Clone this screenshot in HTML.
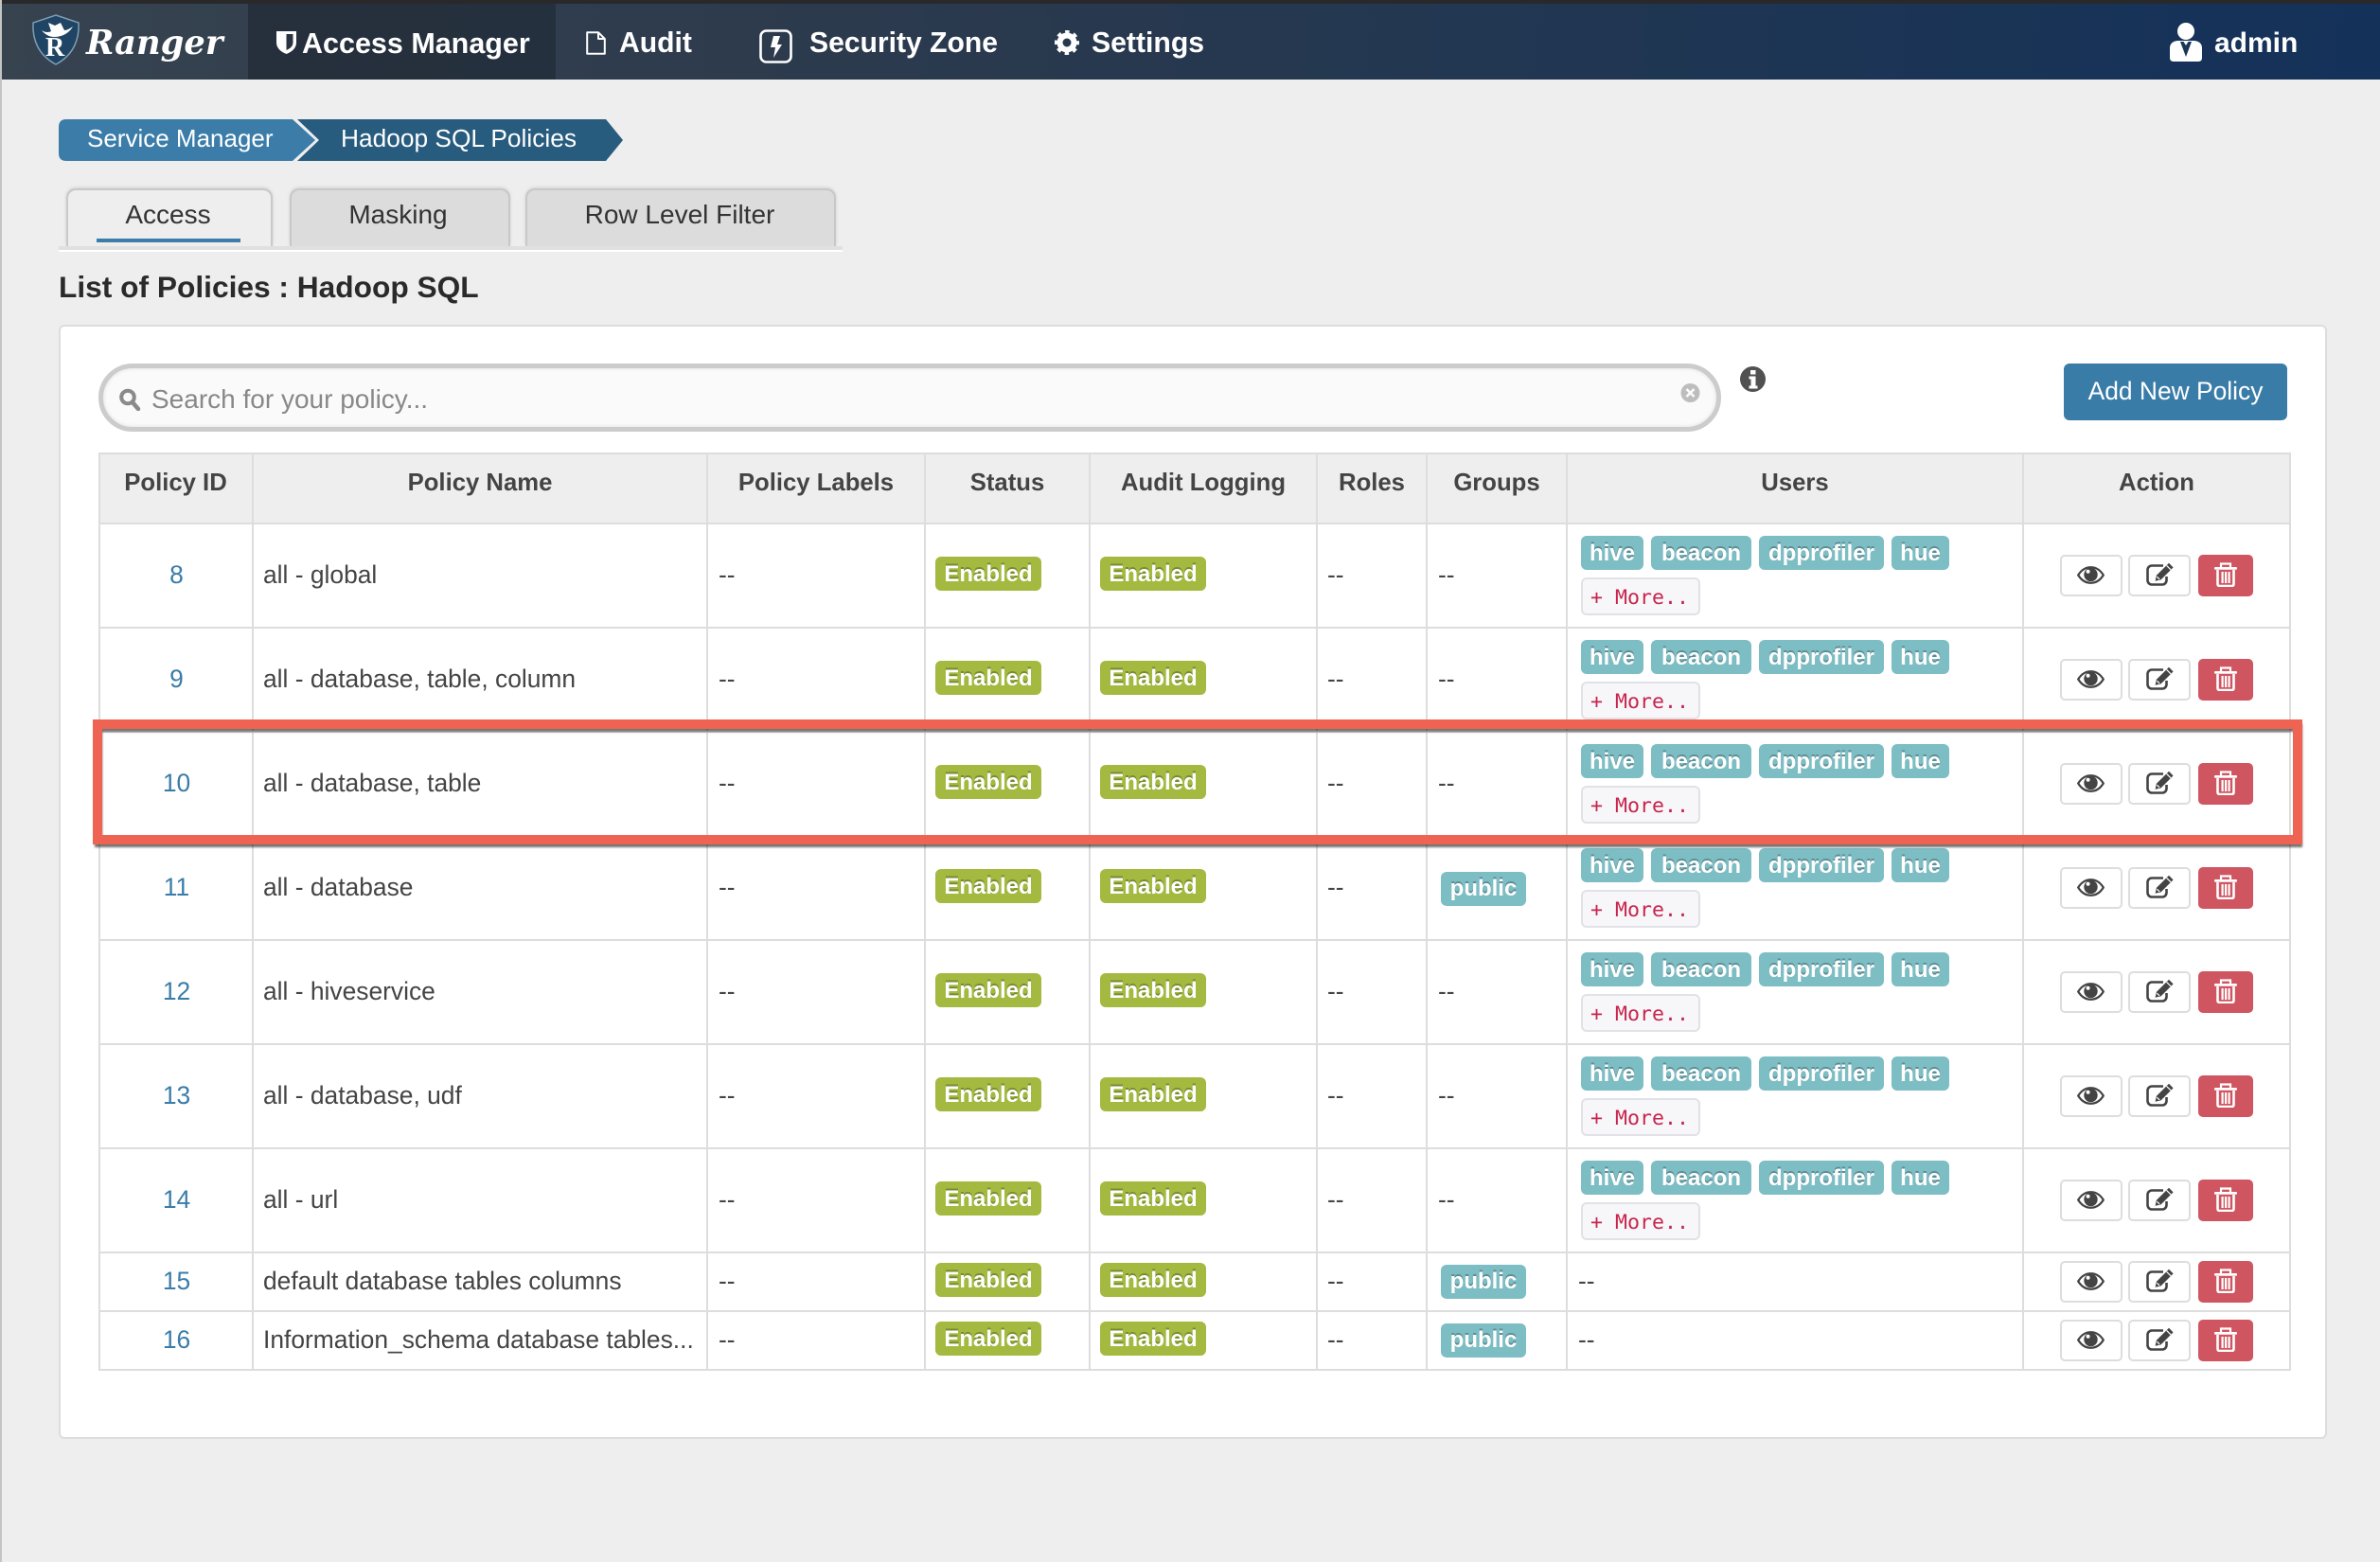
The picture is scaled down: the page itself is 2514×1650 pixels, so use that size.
<!DOCTYPE html>
<html><head><meta charset="utf-8"><title>Ranger</title>
<style>
html,body{margin:0;padding:0;width:2514px;height:1650px;overflow:hidden;background:#eee;font-family:"Liberation Sans",Arial,sans-serif;color:#444}
*{box-sizing:border-box}
.abs,.t,.x,.en,.tg,.more,.btn,.v,.h,.th{position:absolute}
.t{white-space:nowrap;line-height:40px}
#lb{position:absolute;left:0;top:0;width:2px;height:1650px;background:#c4c4c4;z-index:5}
#nav{position:absolute;left:0;top:0;width:2514px;height:84px;border-top:4px solid #29292c;background:linear-gradient(92deg,#37434f 0%,#2c3a4d 35%,#1f3653 70%,#14315a 100%)}
#active{position:absolute;left:262px;top:4px;width:325px;height:80px;background:linear-gradient(92deg,#262f3c,#25303e)}
.n{color:#fff;font-weight:bold;font-size:30.5px}
.bc{color:#fff;font-size:26px}
.tab{position:absolute;top:199px;height:61px;border:2px solid #c8c8c8;border-bottom:0;border-radius:10px 10px 0 0;box-shadow:0 -1px 3px rgba(0,0,0,.12);background:#dcdcdc;text-align:center;font-size:28px;line-height:51px;color:#333}
#panel{position:absolute;left:62px;top:343px;width:2396px;height:1177px;background:#fff;border:2px solid #ddd;border-radius:6px}
#search{position:absolute;left:104px;top:384px;width:1714px;height:72px;border:5px solid #ccc;border-radius:36px;background:#fafafa;box-shadow:inset 0 0 4px rgba(0,0,0,.12)}
#add{position:absolute;left:2180px;top:384px;width:236px;height:60px;background:#3a7ca8;border-radius:6px;color:#fff;font-size:26.4px;line-height:58px;text-align:center}
.v{top:478px;width:2px;height:970px;background:#ddd}
.h{left:104px;width:2316px;height:2px;background:#ddd}
.th{top:490px;line-height:40px;text-align:center;font-weight:bold;font-size:25.7px;color:#444}
.r{position:absolute;left:0;width:2514px;height:10px}
.x{font-size:26.4px;line-height:40px;white-space:nowrap;color:#444}
.tall .x{top:34px}.short .x{top:10px}
.id{left:106px;width:161px;text-align:center;color:#3a7ca9}
.nm{left:278px}.d1{left:759px}.d3{left:1402px}.d4{left:1519px}.d5{left:1667px}
.en,.tg{height:36px;line-height:37px;border-radius:6px;color:#fff;font-weight:bold;font-size:24px;text-align:center;text-shadow:0 -2px 0 rgba(0,0,0,.25);white-space:nowrap}
.en{width:112px;background:#a3b93f}
.tall .en{top:35px}.short .en{top:11px}
.e1{left:988px}.e2{left:1162px}
.tg{background:#7dbdc4;top:13px}
.g1{left:1670px;width:66px}.g2{left:1744px;width:106px}.g3{left:1858px;width:132px}.g4{left:1998px;width:61px}
.pb{left:1522px;width:90px;line-height:35px}
.tall .pb{top:38px}.short .pb{top:13px}
.more{left:1670px;top:57px;width:126px;height:40px;background:#f7f7f9;border:2px solid #e1e1e8;border-radius:6px;color:#c7254e;font-family:"DejaVu Sans Mono","Liberation Mono",monospace;font-size:21.6px;line-height:39px;padding-left:8px;white-space:nowrap}
.btn{height:44px;display:block;border-radius:5px}
.tall .btn{top:33px}.short .btn{top:9px}
.b1{left:2176px;width:66px;background:#fff;border:2px solid #ddd}
.b2{left:2248px;width:66px;background:#fff;border:2px solid #ddd}
.b3{left:2322px;width:58px;background:#cf5561}
.btn svg{position:absolute}
.b1 svg{left:16px;top:10px}
.b2 svg{left:17px;top:6px}
.b3 svg{left:17px;top:8px}
#red{position:absolute;left:98px;top:760px;width:2334px;height:132px;border:10px solid #ee6352;box-shadow:1px 4px 2px -1px rgba(0,0,0,.55),inset 1px 4px 2px -1px rgba(0,0,0,.55)}
</style></head>
<body>
<svg width="0" height="0" style="position:absolute">
<defs>
<g id="eye"><path d="M1.2 9.5C5 3.4 9.8 1.2 14.5 1.2S24 3.4 27.8 9.5C24 15.6 19.2 17.8 14.5 17.8S5 15.6 1.2 9.5Z" fill="#fff" stroke="#444" stroke-width="2.2"/><circle cx="14.5" cy="9" r="7.2" fill="#444"/><circle cx="11.6" cy="5.8" r="2" fill="#fff"/></g>
<g id="edit"><path d="M18 3.5H6a4.5 4.5 0 0 0-4.500 4.500v11a4.500 4.500 0 0 0 4.500 4.500h11a4.500 4.500 0 0 0 4.500-4.500v-4" fill="none" stroke="#444" stroke-width="2.600"/><path d="M24 .8l4.600 4.600-13 13-6 1.300 1.300-6z" fill="#444"/><path d="M21.600 3.400l4.400 4.400" stroke="#fff" stroke-width="1.200"/><path d="M11.400 15.200l2.700 2.700" stroke="#fff" stroke-width="1.200"/></g>
<g id="trash" fill="#fff"><rect x="0" y="5" width="24" height="2.800" rx="1"/><path d="M7 5.500V1.500h10v4" fill="none" stroke="#fff" stroke-width="2.200"/><path d="M3.500 8v15a2 2 0 0 0 2 2h13a2 2 0 0 0 2-2V8" fill="none" stroke="#fff" stroke-width="2.600"/><rect x="7.500" y="10" width="2.200" height="12"/><rect x="11" y="10" width="2.200" height="12"/><rect x="14.500" y="10" width="2.200" height="12"/></g>
</defs></svg>

<div id="nav"></div>
<div id="active"></div>
<div id="lb"></div>

<!-- logo -->
<svg class="abs" style="left:33px;top:15px" width="52" height="54" viewBox="0 0 52 54">
<path d="M26 1L50 9C51 26 45 43 26 53C7 43 1 26 2 9Z" fill="#1f4464" stroke="#7f9db3" stroke-width="1.500"/>
<path d="M11 17C16 20 19 19 21 18L18 9 25 12 31 9 35 17C38 17 41 15 44 13 40 20 33 24 24 24 19 24 14 21 11 17Z" fill="#fff"/>
<text x="15" y="44" font-family="'Liberation Serif',serif" font-weight="bold" font-size="28" fill="#fff">R</text>
</svg>
<div class="t" style="left:91px;top:26px;color:#fff;font-family:'DejaVu Serif','Liberation Serif',serif;font-weight:bold;font-style:italic;font-size:35.300px">Ranger</div>

<!-- nav icons -->
<svg class="abs" style="left:292px;top:33px" width="21" height="24" viewBox="0 0 21 24"><path d="M0 0H21V12C21 18 16 22 10.500 24C5 22 0 18 0 12Z" fill="#fff"/><path d="M10.500 3H17.500V12C17.500 16 14 18.500 10.500 20Z" fill="#2a3441"/></svg>
<div class="t n" style="left:319px;top:26px">Access Manager</div>
<svg class="abs" style="left:619px;top:33px" width="21" height="25" viewBox="0 0 21 25"><path d="M1.200 1.200H13L19.800 8V23.800H1.200Z M13 1.200V8H19.800" fill="none" stroke="#fff" stroke-width="2" stroke-linejoin="round"/></svg>
<div class="t n" style="left:654px;top:26px;font-size:30.100px">Audit</div>
<svg class="abs" style="left:802px;top:31px" width="35" height="36" viewBox="0 0 35 36"><rect x="1.500" y="1.500" width="32" height="33" rx="6" fill="none" stroke="#fff" stroke-width="2.600"/><path d="M15 7h7l-3 9h5l-9 14 2-11h-5z" fill="#fff"/></svg>
<div class="t n" style="left:855px;top:26px;font-size:30.100px">Security Zone</div>
<svg class="abs" style="left:1114px;top:32px" width="26" height="26" viewBox="0 0 26 26"><circle cx="13" cy="13" r="7.500" fill="none" stroke="#fff" stroke-width="6"/><circle cx="13" cy="13" r="11" fill="none" stroke="#fff" stroke-width="4" stroke-dasharray="4.320 4.320" stroke-dashoffset="2.160"/></svg>
<div class="t n" style="left:1153px;top:26px;font-size:30.200px">Settings</div>
<svg class="abs" style="left:2292px;top:24px" width="34" height="41" viewBox="0 0 34 41"><ellipse cx="17" cy="9" rx="9" ry="9" fill="#fff"/><path d="M8 19H26Q34 20 34 27V37Q34 41 30 41H4Q0 41 0 37V27Q0 20 8 19Z" fill="#fff"/><path d="M11 20L17 36L23 20L19.500 20L17 24L14.500 20Z" fill="#1b3655"/></svg>
<div class="t n" style="left:2339px;top:26px;font-size:30px">admin</div>

<!-- breadcrumb -->
<svg class="abs" style="left:62px;top:126px" width="600" height="44" viewBox="0 0 600 44">
<path d="M252 0H578L596 22L578 44H252L275 22Z" fill="#285c7e"/>
<path d="M8 0H247L271 22L247 44H8Q0 44 0 36V8Q0 0 8 0Z" fill="#3b7ca8"/>
</svg>
<div class="t bc" style="left:92px;top:126px">Service Manager</div>
<div class="t bc" style="left:360px;top:126px;font-size:26.300px">Hadoop SQL Policies</div>

<!-- tabs -->
<div class="tab" style="left:70px;width:218px;background:#eee;padding-right:3px">Access</div>
<div class="tab" style="left:306px;width:233px;padding-right:4px">Masking</div>
<div class="tab" style="left:555px;width:328px;padding-right:2px">Row Level Filter</div>
<div class="abs" style="left:102px;top:252px;width:152px;height:4px;background:#3b7ca8"></div>
<div class="abs" style="left:62px;top:260px;width:828px;height:4px;background:#e0e0e0"></div>
<div class="abs" style="left:62px;top:264px;width:828px;height:2px;background:#fff"></div>

<div class="t" style="left:62px;top:283px;font-size:31.700px;font-weight:bold;color:#2a2a2a">List of Policies : Hadoop SQL</div>

<div id="panel"></div>
<div id="search"></div>
<svg class="abs" style="left:125px;top:410px" width="24" height="24" viewBox="0 0 24 24"><circle cx="10" cy="9.500" r="6.800" fill="none" stroke="#8a8a8a" stroke-width="4"/><path d="M15 15l6 7" stroke="#8a8a8a" stroke-width="4.500" stroke-linecap="round"/></svg>
<div class="t" style="left:160px;top:402px;font-size:28px;color:#888">Search for your policy...</div>
<svg class="abs" style="left:1775px;top:404px" width="21" height="22" viewBox="0 0 21 22"><circle cx="10.500" cy="11" r="10" fill="#bdbdbd"/><path d="M6.500 7l8 8M14.500 7l-8 8" stroke="#fafafa" stroke-width="2.600"/></svg>
<svg class="abs" style="left:1838px;top:387px" width="27" height="27" viewBox="0 0 27 27"><circle cx="13.500" cy="13.500" r="13.500" fill="#515151"/><rect x="11" y="4" width="5.500" height="4.500" fill="#fff"/><path d="M9.500 10.500h7v10h2v3h-9v-3h2v-7h-2z" fill="#fff"/></svg>
<div id="add">Add New Policy</div>

<!-- table -->
<div class="abs" style="left:105px;top:478px;width:2315px;height:75px;background:#eee"></div>
<div class="h" style="top:478px"></div><div class="h" style="top:552px"></div><div class="h" style="top:662px"></div><div class="h" style="top:772px"></div><div class="h" style="top:882px"></div><div class="h" style="top:992px"></div><div class="h" style="top:1102px"></div><div class="h" style="top:1212px"></div><div class="h" style="top:1322px"></div><div class="h" style="top:1384px"></div><div class="h" style="top:1446px"></div>
<div class="v" style="left:104px"></div><div class="v" style="left:266px"></div><div class="v" style="left:746px"></div><div class="v" style="left:976px"></div><div class="v" style="left:1150px"></div><div class="v" style="left:1390px"></div><div class="v" style="left:1506px"></div><div class="v" style="left:1654px"></div><div class="v" style="left:2136px"></div><div class="v" style="left:2418px"></div>

<div class="th" style="left:105px;width:161px">Policy ID</div>
<div class="th" style="left:267px;width:480px">Policy Name</div>
<div class="th" style="left:747px;width:230px">Policy Labels</div>
<div class="th" style="left:977px;width:174px">Status</div>
<div class="th" style="left:1151px;width:240px">Audit Logging</div>
<div class="th" style="left:1391px;width:116px">Roles</div>
<div class="th" style="left:1507px;width:148px">Groups</div>
<div class="th" style="left:1655px;width:482px">Users</div>
<div class="th" style="left:2137px;width:282px">Action</div>

<div class="r tall" style="top:553px"><span class="x id">8</span><span class="x nm">all - global</span><span class="x d1">--</span><b class="en e1">Enabled</b><b class="en e2">Enabled</b><span class="x d3">--</span><span class="x d4">--</span><b class="tg g1">hive</b><b class="tg g2">beacon</b><b class="tg g3">dpprofiler</b><b class="tg g4">hue</b><span class="more">+ More..</span><i class="btn b1"><svg width="29" height="19"><use href="#eye"/></svg></i><i class="btn b2"><svg width="29" height="25"><use href="#edit"/></svg></i><i class="btn b3"><svg width="24" height="26"><use href="#trash"/></svg></i></div>

<div class="r tall" style="top:663px"><span class="x id">9</span><span class="x nm">all - database, table, column</span><span class="x d1">--</span><b class="en e1">Enabled</b><b class="en e2">Enabled</b><span class="x d3">--</span><span class="x d4">--</span><b class="tg g1">hive</b><b class="tg g2">beacon</b><b class="tg g3">dpprofiler</b><b class="tg g4">hue</b><span class="more">+ More..</span><i class="btn b1"><svg width="29" height="19"><use href="#eye"/></svg></i><i class="btn b2"><svg width="29" height="25"><use href="#edit"/></svg></i><i class="btn b3"><svg width="24" height="26"><use href="#trash"/></svg></i></div>

<div class="r tall" style="top:773px"><span class="x id">10</span><span class="x nm">all - database, table</span><span class="x d1">--</span><b class="en e1">Enabled</b><b class="en e2">Enabled</b><span class="x d3">--</span><span class="x d4">--</span><b class="tg g1">hive</b><b class="tg g2">beacon</b><b class="tg g3">dpprofiler</b><b class="tg g4">hue</b><span class="more">+ More..</span><i class="btn b1"><svg width="29" height="19"><use href="#eye"/></svg></i><i class="btn b2"><svg width="29" height="25"><use href="#edit"/></svg></i><i class="btn b3"><svg width="24" height="26"><use href="#trash"/></svg></i></div>

<div class="r tall" style="top:883px"><span class="x id">11</span><span class="x nm">all - database</span><span class="x d1">--</span><b class="en e1">Enabled</b><b class="en e2">Enabled</b><span class="x d3">--</span><b class="tg pb">public</b><b class="tg g1">hive</b><b class="tg g2">beacon</b><b class="tg g3">dpprofiler</b><b class="tg g4">hue</b><span class="more">+ More..</span><i class="btn b1"><svg width="29" height="19"><use href="#eye"/></svg></i><i class="btn b2"><svg width="29" height="25"><use href="#edit"/></svg></i><i class="btn b3"><svg width="24" height="26"><use href="#trash"/></svg></i></div>

<div class="r tall" style="top:993px"><span class="x id">12</span><span class="x nm">all - hiveservice</span><span class="x d1">--</span><b class="en e1">Enabled</b><b class="en e2">Enabled</b><span class="x d3">--</span><span class="x d4">--</span><b class="tg g1">hive</b><b class="tg g2">beacon</b><b class="tg g3">dpprofiler</b><b class="tg g4">hue</b><span class="more">+ More..</span><i class="btn b1"><svg width="29" height="19"><use href="#eye"/></svg></i><i class="btn b2"><svg width="29" height="25"><use href="#edit"/></svg></i><i class="btn b3"><svg width="24" height="26"><use href="#trash"/></svg></i></div>

<div class="r tall" style="top:1103px"><span class="x id">13</span><span class="x nm">all - database, udf</span><span class="x d1">--</span><b class="en e1">Enabled</b><b class="en e2">Enabled</b><span class="x d3">--</span><span class="x d4">--</span><b class="tg g1">hive</b><b class="tg g2">beacon</b><b class="tg g3">dpprofiler</b><b class="tg g4">hue</b><span class="more">+ More..</span><i class="btn b1"><svg width="29" height="19"><use href="#eye"/></svg></i><i class="btn b2"><svg width="29" height="25"><use href="#edit"/></svg></i><i class="btn b3"><svg width="24" height="26"><use href="#trash"/></svg></i></div>

<div class="r tall" style="top:1213px"><span class="x id">14</span><span class="x nm">all - url</span><span class="x d1">--</span><b class="en e1">Enabled</b><b class="en e2">Enabled</b><span class="x d3">--</span><span class="x d4">--</span><b class="tg g1">hive</b><b class="tg g2">beacon</b><b class="tg g3">dpprofiler</b><b class="tg g4">hue</b><span class="more">+ More..</span><i class="btn b1"><svg width="29" height="19"><use href="#eye"/></svg></i><i class="btn b2"><svg width="29" height="25"><use href="#edit"/></svg></i><i class="btn b3"><svg width="24" height="26"><use href="#trash"/></svg></i></div>

<div class="r short" style="top:1323px"><span class="x id">15</span><span class="x nm">default database tables columns</span><span class="x d1">--</span><b class="en e1">Enabled</b><b class="en e2">Enabled</b><span class="x d3">--</span><b class="tg pb">public</b><span class="x d5">--</span><i class="btn b1"><svg width="29" height="19"><use href="#eye"/></svg></i><i class="btn b2"><svg width="29" height="25"><use href="#edit"/></svg></i><i class="btn b3"><svg width="24" height="26"><use href="#trash"/></svg></i></div>

<div class="r short" style="top:1385px"><span class="x id">16</span><span class="x nm">Information_schema database tables...</span><span class="x d1">--</span><b class="en e1">Enabled</b><b class="en e2">Enabled</b><span class="x d3">--</span><b class="tg pb">public</b><span class="x d5">--</span><i class="btn b1"><svg width="29" height="19"><use href="#eye"/></svg></i><i class="btn b2"><svg width="29" height="25"><use href="#edit"/></svg></i><i class="btn b3"><svg width="24" height="26"><use href="#trash"/></svg></i></div>

<div id="red"></div>
</body></html>
